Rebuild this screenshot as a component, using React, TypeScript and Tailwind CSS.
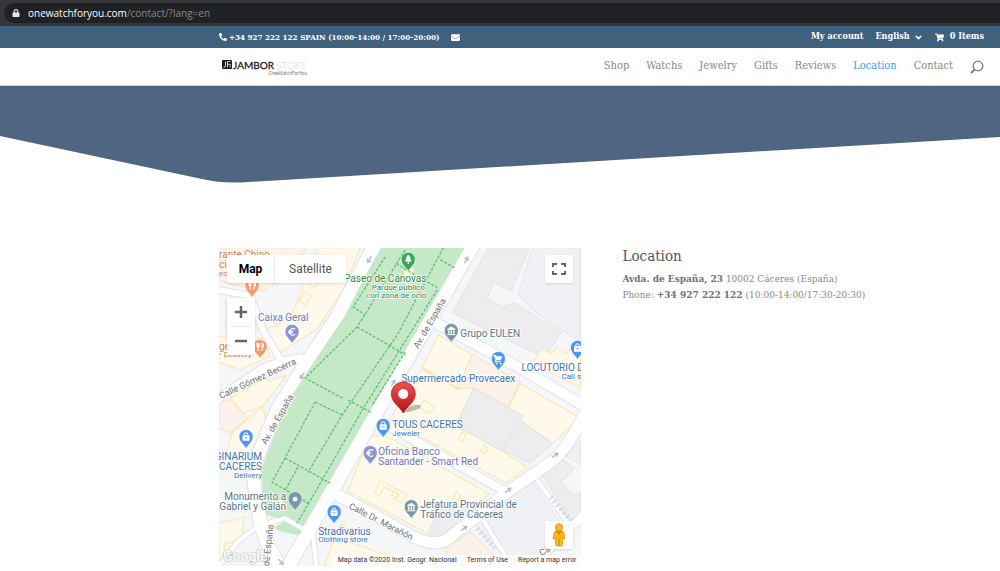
import type { ReactNode } from 'react';
import { FaLock, FaPhoneAlt, FaEnvelope, FaShoppingCart } from 'react-icons/fa';
import { ChevronDown } from 'lucide-react';

const navItems = ['Shop', 'Watchs', 'Jewelry', 'Gifts', 'Reviews', 'Location', 'Contact'];

type Shape = { points: string; kind: 'shop' | 'grey' | 'peach' | 'block' };

const fills = {
  shop: { fill: '#fef9eb', stroke: '#fbe6a9' },
  grey: { fill: '#ededef', stroke: '#e2e4e8' },
  peach: { fill: '#fdf2e9', stroke: '#f8dfcb' },
  block: { fill: '#f0f1f4', stroke: '#e3e6eb' },
};

const shapes: Shape[] = [
  { kind: 'peach', points: '219,248 306,248 292,276 262,292 219,281' },
  { kind: 'peach', points: '226,300 249,303 258,330 248,340 226,338' },
  { kind: 'shop', points: '219,336 249,342 262,338 270,356 240,370 219,362' },
  { kind: 'shop', points: '318,248 360,248 344,288 317,329 279,353 262,332 290,319 303,288 300,277' },
  { kind: 'shop', points: '304,292 311,296 306,305 299,301' },
  { kind: 'shop', points: '313,275 320,279 315,288 308,284' },
  { kind: 'shop', points: '322,255 343,262 337,274 318,268' },
  { kind: 'shop', points: '231,398 262,380 271,380 286,376 262,407 243,413' },
  { kind: 'peach', points: '219,404 230,399 247,418 230,433 219,428' },
  { kind: 'shop', points: '249,418 262,407 266,418 253,448 246,462 226,456 232,433' },
  { kind: 'shop', points: '219,523 244,517 242,538 225,544 222,562 219,562' },
  { kind: 'grey', points: '488,248 529,248 511,291 493,283 487,298 502,307 515,303 536,317 561,332 544,358 452,313' },
  { kind: 'block', points: '532,248 580,248 580,342 562,330 538,315 518,294' },
  { kind: 'shop', points: '438,335 472,355 457,388 422,367' },
  { kind: 'peach', points: '472,355 520,382 505,411 457,388' },
  { kind: 'shop', points: '520,384 580,418 552,443 507,411' },
  { kind: 'shop', points: '409,384 422,369 457,389 473,388 455,426 502,451 526,467 506,483 390,420' },
  { kind: 'shop', points: '424,400 434,406 430,413 419,408' },
  { kind: 'shop', points: '462,432 466,434 462,442 458,439' },
  { kind: 'shop', points: '484,445 488,448 484,454 480,451' },
  { kind: 'grey', points: '474,388 523,416 500,450 456,426' },
  { kind: 'grey', points: '522,422 552,443 530,463 501,450' },
  { kind: 'shop', points: '541,349 551,354 557,347 566,354 571,348 580,356 580,387 532,364' },
  { kind: 'shop', points: '369,436 386,436 489,494 462,516 429,534 348,491' },
  { kind: 'shop', points: '380,480 406,494 402,503 395,500 399,494 384,487 379,496 375,492' },
  { kind: 'shop', points: '393,491 398,494 395,499 391,497' },
  { kind: 'shop', points: '456,492 461,495 456,502 452,499' },
  { kind: 'grey', points: '438,508 477,506 459,523 435,538 428,533' },
  { kind: 'shop', points: '341,524 352,530 349,542 418,566 324,566 331,548' },
  { kind: 'block', points: '474,523 532,481 562,526 546,546 516,562 494,548' },
  { kind: 'peach', points: '445,548 470,532 495,556 490,566 450,566' },
  { kind: 'grey', points: '541,474 558,457 574,468 561,482 573,496 580,492 580,516 570,520' },
  { kind: 'block', points: '566,456 580,440 580,465' },
];

const roads = [
  { d: 'M219 290 L250 296 L264 332 L283 364', w: 6 },
  { d: 'M219 398 L262 369 Q285 359 314 357', w: 8 },
  { d: 'M219 566 L238 541 L258 526 L284 518 L313 534 L316 566', w: 4 },
  { d: 'M377 240 L350 292 L337 317 L307 362 L277 410 L258 455 Q252 470 255 490 L260 520 Q263 540 281 568', w: 13 },
  { d: 'M476 240 L286 570', w: 13 },
  { d: 'M432 321 L523 370 L584 406', w: 10 },
  { d: 'M374 418 L506 492', w: 8 },
  { d: 'M334 493 L405 532 Q430 548 446 540 L507 492 L552 461 Q568 447 584 414', w: 11 },
  { d: 'M535 477 L568 524', w: 4 },
  { d: 'M482 518 L497 543 L512 566', w: 4 },
  { d: 'M526 568 L546 552 L584 514', w: 8 },
];

const parkPaths =
  'M405 250 L357 327 M405 352 L372 405 M385 257 L353 307 L365 315 M443 248 L397 335 L342 415 L308 472 M315 402 L272 482 L308 503 M437 290 L362 410 L322 480 L297 523 M357 327 L405 355 M357 327 L305 378 L342 398 M315 402 L342 415 M348 400 L372 413 M285 458 L330 483 M298 467 L285 490 M396 264 L437 288 M440 260 L454 268';

type PinIcon = 'food' | 'euro' | 'bank' | 'cart' | 'bag' | 'dot' | 'tree';

const pins: { x: number; y: number; color: string; icon: PinIcon }[] = [
  { x: 408, y: 272, color: '#34a853', icon: 'tree' },
  { x: 252, y: 298, color: '#f9996b', icon: 'food' },
  { x: 260, y: 359, color: '#f9996b', icon: 'food' },
  { x: 292, y: 344, color: '#8893d8', icon: 'euro' },
  { x: 451, y: 343, color: '#7898a9', icon: 'bank' },
  { x: 498, y: 371, color: '#4a96f3', icon: 'cart' },
  { x: 577, y: 360, color: '#4a96f3', icon: 'bag' },
  { x: 383, y: 438, color: '#4a96f3', icon: 'bag' },
  { x: 370, y: 465, color: '#8893d8', icon: 'euro' },
  { x: 246, y: 449, color: '#4a96f3', icon: 'bag' },
  { x: 295, y: 511, color: '#7898a9', icon: 'dot' },
  { x: 334, y: 524, color: '#4a96f3', icon: 'bag' },
  { x: 411, y: 519, color: '#7898a9', icon: 'bank' },
];

const labels: { x: number; y: number; text: string; color: string; small?: boolean; anchor?: 'middle' | 'end' }[] = [
  { x: 219, y: 258, text: 'rante Chino', color: '#d87a50' },
  { x: 219, y: 268, text: 'ción', color: '#d87a50' },
  { x: 219, y: 276, text: 'ecial', color: '#d87a50', small: true },
  { x: 219, y: 350, text: 'ge', color: '#d87a50' },
  { x: 219, y: 357, text: '• Delivery', color: '#d87a50', small: true },
  { x: 258, y: 321, text: 'Caixa Geral', color: '#6d78b8' },
  { x: 385, y: 282, text: 'Paseo de Cánovas', color: '#33894c', anchor: 'middle' },
  { x: 398, y: 290, text: 'Parque público', color: '#33894c', small: true, anchor: 'middle' },
  { x: 396, y: 298, text: 'con zona de ocio', color: '#33894c', small: true, anchor: 'middle' },
  { x: 460, y: 337, text: 'Grupo EULEN', color: '#5c7886' },
  { x: 458, y: 382, text: 'Supermercado Provecaex', color: '#3d73b8', anchor: 'middle' },
  { x: 521, y: 371, text: 'LOCUTORIO D', color: '#3d73b8' },
  { x: 561, y: 379, text: 'Call s', color: '#3d73b8', small: true },
  { x: 392, y: 428, text: 'TOUS CACERES', color: '#3d73b8' },
  { x: 392, y: 436, text: 'Jeweler', color: '#3d73b8', small: true },
  { x: 378, y: 455, text: 'Oficina Banco', color: '#6d78b8' },
  { x: 378, y: 465, text: 'Santander - Smart Red', color: '#6d78b8' },
  { x: 262, y: 460, text: 'GINARIUM', color: '#3d73b8', anchor: 'end' },
  { x: 262, y: 470, text: 'CACERES', color: '#3d73b8', anchor: 'end' },
  { x: 262, y: 478, text: 'Delivery', color: '#3d73b8', small: true, anchor: 'end' },
  { x: 286, y: 500, text: 'Monumento a', color: '#5c7886', anchor: 'end' },
  { x: 286, y: 510, text: 'Gabriel y Galán', color: '#5c7886', anchor: 'end' },
  { x: 318, y: 535, text: 'Stradivarius', color: '#3d73b8' },
  { x: 318, y: 542, text: 'Clothing store', color: '#3d73b8', small: true },
  { x: 420, y: 508, text: 'Jefatura Provincial de', color: '#5c7886' },
  { x: 420, y: 518, text: 'Tráfico de Cáceres', color: '#5c7886' },
];

const streets = [
  { x: 221, y: 399, angle: -25, text: 'Calle Gómez Becerra' },
  { x: 418, y: 349, angle: -60, text: 'Av. de España' },
  { x: 266, y: 445, angle: -60, text: 'Av. de España' },
  { x: 269, y: 566, angle: -84, text: 'de España' },
  { x: 348, y: 508, angle: 27, text: 'Calle Dr. Marañón' },
  { x: 541, y: 556, angle: -30, text: 'Ca' },
];

const arrows = [
  { x: 369, y: 260, angle: 120 },
  { x: 302, y: 376, angle: 120 },
  { x: 466, y: 260, angle: -60 },
  { x: 393, y: 383, angle: -60 },
  { x: 508, y: 490, angle: -38 },
  { x: 555, y: 455, angle: -38 },
  { x: 464, y: 528, angle: -38 },
  { x: 281, y: 562, angle: 50 },
];

function PinGlyph({ icon }: { icon: PinIcon }) {
  switch (icon) {
    case 'food':
      return (
        <path d="M-3 -16v3a1 1 0 0 0 2 0v-3M-2 -16v8M2 -8v-8c2 1 2 4 0 5" fill="none" stroke="#fff" strokeWidth="1.1" />
      );
    case 'euro':
      return (
        <path d="M3 -14.5a3.3 3.3 0 1 0 0 5M-4 -12.8h5M-4 -11.2h4.5" fill="none" stroke="#fff" strokeWidth="1.2" />
      );
    case 'bank':
      return <path d="M-4 -14l4-2.5 4 2.5v1h-8zM-3.2 -12.5h1.4v3h-1.4zM-.7 -12.5h1.4v3h-1.4zM1.8 -12.5h1.4v3h-1.4zM-4 -9h8v1h-8z" fill="#fff" />;
    case 'cart':
      return (
        <g fill="#fff">
          <path d="M-4.5 -16h2l.6 1.4h6l-1.8 3.8h-4.2l-.6 1h5.2v1h-6.6l1-2.4-1.9-3.9h-.7z" />
          <circle cx="-1.6" cy="-7.4" r=".9" />
          <circle cx="2.3" cy="-7.4" r=".9" />
        </g>
      );
    case 'bag':
      return (
        <g>
          <rect x="-3.5" y="-13.8" width="7" height="5.6" rx=".6" fill="#fff" />
          <path d="M-1.7 -13.5v-1a1.7 1.7 0 0 1 3.4 0v1" fill="none" stroke="#fff" />
          <path d="M-1.4 -12a1.5 1.5 0 0 0 2.8 0" fill="none" stroke="#4a96f3" strokeWidth=".8" />
        </g>
      );
    case 'tree':
      return <path d="M0 -17.5l2.6 4h-1l2 3.2h-3v2.5h-1.2v-2.5h-3l2-3.2h-1z" fill="#fff" />;
    default:
      return <circle cx="0" cy="-12" r="2.4" fill="#fff" />;
  }
}

function MapCanvas() {
  return (
    <svg
      viewBox="219 248 361 318"
      preserveAspectRatio="xMidYMid slice"
      className="block h-full w-full font-['Roboto',sans-serif]"
      aria-label="Map of Cáceres"
    >
      <rect x="200" y="240" width="400" height="340" fill="#f5f6f8" />
      {shapes.map((s, i) => (
        <polygon key={i} points={s.points} fill={fills[s.kind].fill} stroke={fills[s.kind].stroke} strokeWidth="1" />
      ))}
      {roads.map((r) => (
        <path key={r.d} d={r.d} fill="none" stroke="#dfe3e9" strokeWidth={r.w + 2} strokeLinejoin="round" />
      ))}
      {roads.map((r) => (
        <path key={r.d} d={r.d} fill="none" stroke="#fff" strokeWidth={r.w} strokeLinejoin="round" />
      ))}
      <path d="M550 497 L572 522 M477 528 L494 548" stroke="#d5d9e0" strokeWidth="5" strokeDasharray="2 3" />

      {/* park */}
      <path
        d="M382 247 L363 280 L344 317 L315 360 L283 409 L268 452 L261 470 L263 492 L266 514 L278 518 L286 515 L303 526 L465 247 Z"
        fill="#c5e8c7"
      />
      <path d="M273 527 L285 521 L302 531 L299 535 L280 531 Z" fill="#c5e8c7" />
      <path d="M404 272 l5 -6 l5 3 l-3 11 l-9 2 z M274 503 l7 -4 l4 5 l-6 8 z" fill="#fef3d0" />
      <path d={parkPaths} fill="none" stroke="#58b979" strokeWidth="1.2" strokeDasharray="3 1.5" />

      {arrows.map((a, i) => (
        <path
          key={i}
          transform={`translate(${a.x} ${a.y}) rotate(${a.angle})`}
          d="M-4 0h6M0 -2.2l3 2.2l-3 2.2"
          fill="none"
          stroke="#b2b8cb"
          strokeWidth="1.3"
        />
      ))}

      {streets.map((s, i) => (
        <text
          key={i}
          transform={`translate(${s.x} ${s.y}) rotate(${s.angle})`}
          fontSize="9"
          fill="#6f7276"
          stroke="#fff"
          strokeWidth="2"
          paintOrder="stroke"
        >
          {s.text}
        </text>
      ))}

      {labels.map((l, i) => (
        <text
          key={i}
          x={l.x}
          y={l.y}
          fontSize={l.small ? 8 : 10}
          textAnchor={l.anchor}
          fill={l.color}
          stroke="#fff"
          strokeOpacity="0.8"
          strokeWidth="2"
          paintOrder="stroke"
        >
          {l.text}
        </text>
      ))}

      {pins.map((p) => (
        <g key={`${p.x}-${p.y}`} transform={`translate(${p.x} ${p.y})`}>
          <path
            d="M0 0C-1 -4 -7 -6.500 -7 -12.500A7 7 0 0 1 7 -12.500C7 -6.500 1 -4 0 0Z"
            fill={p.color}
            stroke="#fff"
            strokeWidth=".6"
          />
          <PinGlyph icon={p.icon} />
        </g>
      ))}

      {/* store marker */}
      <defs>
        <linearGradient id="marker" x1="0" y1="0" x2="0" y2="1">
          <stop offset="0" stopColor="#f0524f" />
          <stop offset="1" stopColor="#b3141a" />
        </linearGradient>
      </defs>
      <path d="M403 413 Q410 403 420 405 Q424 409 403 413Z" fill="#000" opacity=".25" />
      <path
        d="M403 413C399 406 391 402 391 394A12 12 0 0 1 415 394C415 402 407 406 403 413Z"
        fill="url(#marker)"
        stroke="#b51d20"
        strokeWidth=".7"
      />
      <circle cx="403" cy="394" r="5" fill="#fff" />

      <text x="223" y="561" fontSize="14" fontWeight="500" fill="#fff" stroke="#b9bdc2" strokeWidth="1.2" paintOrder="stroke">
        Google
      </text>
    </svg>
  );
}

function MapButton({ label, className, children }: { label: string; className: string; children: ReactNode }) {
  return (
    <button aria-label={label} className={`flex items-center justify-center bg-white ${className}`}>
      {children}
    </button>
  );
}

function StoreMap() {
  return (
    <div className="relative h-[318px] overflow-hidden">
      <MapCanvas />
      <div className="absolute top-[7px] left-2 flex h-7 rounded-xs bg-white font-['Roboto',sans-serif] text-[12px] shadow">
        <button className="w-12 border-r border-gray-200 font-bold text-black">Map</button>
        <button className="w-[71px] text-[#565656]">Satellite</button>
      </div>
      <div className="absolute top-[50px] left-2 flex w-7 flex-col items-center rounded-xs bg-white shadow">
        <MapButton label="Zoom in" className="h-7 w-7">
          <svg width="14" height="14" viewBox="0 0 14 14" stroke="#666" strokeWidth="2.500">
            <path d="M7 1v12M1 7h12" />
          </svg>
        </MapButton>
        <div className="h-px w-5 bg-gray-200" />
        <MapButton label="Zoom out" className="h-7 w-7">
          <svg width="14" height="14" viewBox="0 0 14 14" stroke="#666" strokeWidth="2.500">
            <path d="M1 7h12" />
          </svg>
        </MapButton>
      </div>
      <MapButton label="Toggle fullscreen" className="absolute top-[7px] right-2 h-7 w-7 rounded-xs shadow">
        <svg width="14" height="14" viewBox="0 0 14 14" fill="none" stroke="#666" strokeWidth="2">
          <path d="M1 5V2h4M9 2h4v3M13 9v3H9M5 12H1V9" />
        </svg>
      </MapButton>
      <MapButton label="Street View" className="absolute right-2 bottom-[17px] h-7 w-7 rounded-xs shadow">
        <svg width="14" height="24" viewBox="0 0 14 24">
          <path d="M2.500 8.500h9l1.500 7h-2l-.8 7.500H4L3 15.500H1z" fill="#fbb917" stroke="#d08b0e" strokeWidth=".7" />
          <path d="M7 16v7" stroke="#d08b0e" />
          <path d="M4 8.500h6l-3 3.500z" fill="#e8761d" />
          <circle cx="7" cy="4.500" r="3.700" fill="#fbb917" stroke="#d08b0e" strokeWidth=".7" />
        </svg>
      </MapButton>
      <div className="absolute right-0 bottom-0 flex h-[11px] items-center gap-2.5 bg-white/70 px-1 font-['Roboto',sans-serif] text-[7px] text-[#333]">
        <span>Map data ©2020 Inst. Geogr. Nacional</span>
        <a href="#terms">Terms of Use</a>
        <a href="#report">Report a map error</a>
      </div>
    </div>
  );
}

function Logo() {
  return (
    <a href="#home" aria-label="Jambor Store" className="block">
      <svg width="88" height="20" viewBox="0 0 88 20" className="font-['Lato',sans-serif]">
        <rect x="1" y="3" width="10" height="9" rx="1" fill="#1d1d1d" />
        <path d="M4.500 4.500v4.500q0 1.500-2 1.300M6.500 10.500v-6h3M6.500 7.300h2.800v3" fill="none" stroke="#fff" strokeWidth=".8" />
        <text x="12" y="12" fontSize="10" fill="#222" stroke="#222" strokeWidth=".3">JAMBOR</text>
        <text x="55" y="12" fontSize="10" fontWeight="300" fill="#ddd">STORE</text>
        <text x="86" y="18" fontSize="5" textAnchor="end" fill="#777">OneWatchForYou</text>
      </svg>
    </a>
  );
}

export default function App() {
  return (
    <div className="min-h-screen bg-white font-['DejaVu_Serif_Condensed','DejaVu_Serif',serif] text-[10px] text-[#888]">
      <div className="bg-[#35363a] py-[3px] pl-1">
        <div className="flex h-5 items-center gap-2 rounded-l-full bg-[#202124] pl-2 font-['Open_Sans',sans-serif] text-[10px] text-[#85888c]">
          <FaLock className="size-2 text-gray-200" />
          <span>
            <span className="text-white">onewatchforyou.com</span>/contact/?lang=en
          </span>
        </div>
      </div>

      <div className="flex h-[22px] items-center justify-between bg-[#40617d] pr-4 pl-[219px] text-[9px] font-bold text-white">
        <div className="flex items-center gap-3">
          <a href="tel:+34927222122" className="flex items-center gap-0.5 text-[8px]">
            <FaPhoneAlt className="size-2" />
            +34 927 222 122 SPAIN (10:00-14:00 / 17:00-20:00)
          </a>
          <a href="#mail" aria-label="Email">
            <FaEnvelope className="size-[9px]" />
          </a>
        </div>
        <div className="flex items-center gap-3">
          <a href="#account">My account</a>
          <button className="flex items-center gap-1">
            English
            <ChevronDown className="size-[9px]" strokeWidth={4} />
          </button>
          <a href="#cart" className="flex items-center gap-1.5">
            <FaShoppingCart className="size-[9px]" />
            0 Items
          </a>
        </div>
      </div>

      <header className="flex h-[38px] items-center justify-between border-b border-gray-300 pr-4 pl-[221px]">
        <Logo />
        <nav className="flex items-center gap-[17px] text-[11px]">
          {navItems.map((item) => (
            <a key={item} href={`#${item.toLowerCase()}`} className={item === 'Location' ? 'text-[#2ea3f2]' : ''}>
              {item}
            </a>
          ))}
          <button aria-label="Search">
            <svg width="14" height="14" viewBox="0 0 14 14" fill="none" stroke="#777" strokeWidth="1.300">
              <circle cx="8" cy="6" r="4.800" />
              <path d="M4.600 9.600L1 13" strokeWidth="1.800" />
            </svg>
          </button>
        </nav>
      </header>

      <svg className="block h-[97px] w-full" viewBox="0 0 1000 97" preserveAspectRatio="none">
        <path d="M0 0H1000V51L248 96Q223 98 202 93L0 50Z" fill="#4f6581" />
      </svg>

      <main className="grid grid-cols-2 gap-[42px] pt-[65px] pr-4 pb-1 pl-[219px]">
        <StoreMap />
        <section>
          <h1 className="mb-[7px] text-[15px] leading-4 text-[#555]">Location</h1>
          <p className="leading-4">
            <strong className="text-[#707070]">Avda. de España, 23</strong> 10002 Cáceres (España)
          </p>
          <p className="leading-4">
            Phone: <strong className="text-[#707070]">+34 927 222 122</strong> (10:00-14:00/17:30-20:30)
          </p>
        </section>
      </main>
    </div>
  );
}
